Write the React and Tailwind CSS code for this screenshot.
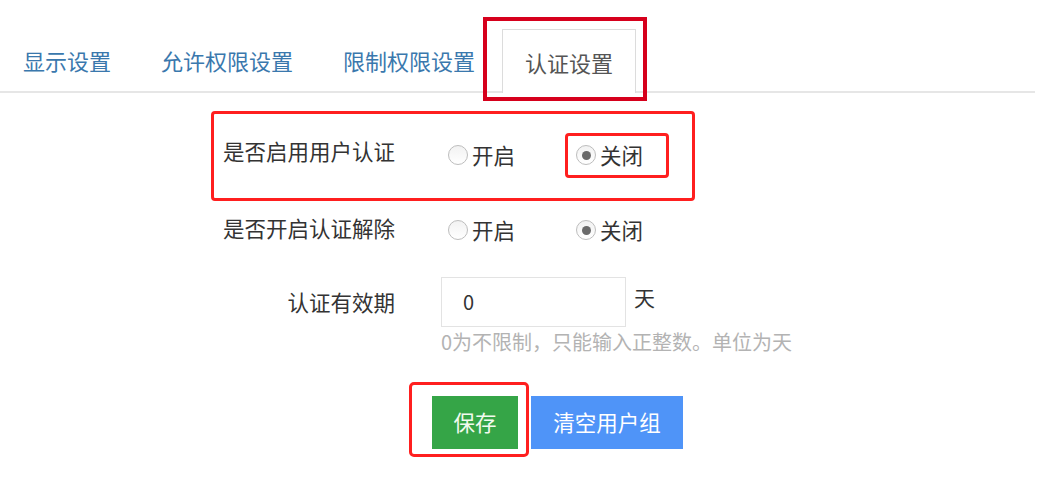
import React from "react";

const tabs = ["显示设置", "允许权限设置", "限制权限设置", "认证设置"];

function Radio({ checked, label }) {
  return (
    <div className="flex items-center">
      <span className="w-[20px] h-[20px] rounded-full border-[1.5px] border-[#bdbdbd] bg-gradient-to-b from-[#f2f2f2] to-white flex items-center justify-center">
        {checked && <span className="w-[9px] h-[9px] rounded-full bg-[#6a6a6a]" />}
      </span>
      <span className="ml-[4px] text-[21.5px] leading-[30px] text-[#333]">{label}</span>
    </div>
  );
}

function RadioRow({ label, mt }) {
  return (
    <div className={`flex items-center h-[40px] ${mt}`}>
      <div className="w-[395px] text-right text-[21.5px] leading-[30px] text-[#333] mb-[8px]">{label}</div>
      <div className="ml-[46px] pl-[7px] flex items-center">
        <div className="w-[128px]">
          <Radio label="开启" />
        </div>
        <Radio checked label="关闭" />
      </div>
    </div>
  );
}

export default function App() {
  return (
    <div className="relative w-[1044px] h-[488px] bg-white overflow-hidden font-['Noto_Sans_CJK_SC','Noto_Sans',sans-serif]">
      {/* tabs */}
      <div className="flex items-start w-[1035px] border-b-2 border-[#e6e6e6] pt-[29px]">
        {tabs.map((t, i) =>
          i === 3 ? (
            <div
              key={t}
              className="h-[64px] mb-[-2px] px-[22px] mr-[4px] border-x border-t border-[#dcdcdc] bg-white flex items-center text-[22px] leading-[32px] text-[#555]"
            >
              {t}
            </div>
          ) : (
            <div
              key={t}
              className="h-[62px] px-[22px] mr-[4px] border border-transparent flex items-center text-[22px] leading-[32px] text-[#3a78ad]"
            >
              {t}
            </div>
          )
        )}
      </div>

      {/* form */}
      <div className="flex flex-col">
        <RadioRow label="是否启用用户认证" mt="mt-[42px]" />
        <div className="flex items-center h-[40px] mt-[35px]">
          <div className="w-[395px] text-right text-[21.5px] leading-[30px] text-[#333] mb-[5px]">是否开启认证解除</div>
          <div className="ml-[46px] pl-[7px] flex items-center">
            <div className="w-[128px]">
              <Radio label="开启" />
            </div>
            <Radio checked label="关闭" />
          </div>
        </div>

        <div className="flex items-center h-[50px] mt-[27px]">
          <div className="w-[395px] text-right text-[21.5px] leading-[30px] text-[#333]">认证有效期</div>
          <div className="ml-[46px] w-[185px] h-[50px] border border-[#e3e3e3] flex items-center pl-[21px] text-[20px] text-[#333]">
            0
          </div>
          <div className="ml-[8px] mb-[10px] text-[21px] leading-[30px] text-[#333]">天</div>
        </div>

        <div className="ml-[441px] mt-[1px] text-[20px] leading-[28px] text-[#b3b3b3]">
          0为不限制，只能输入正整数。单位为天
        </div>

        <div className="ml-[432px] mt-[40px] flex items-center gap-[13px]">
          <div className="w-[86px] h-[53px] bg-[#35a547] text-[#f2faef] text-[21.5px] flex items-center justify-center">
            保存
          </div>
          <div className="w-[152px] h-[53px] bg-[#4f94f8] text-white text-[21.5px] flex items-center justify-center">
            清空用户组
          </div>
        </div>
      </div>

      {/* red annotation boxes */}
      <div className="absolute left-[483px] top-[17px] w-[164px] h-[84px] border-[4px] border-[#d6001c]" />
      <div className="absolute left-[211px] top-[111px] w-[484px] h-[90px] border-[3px] border-[#ff1f1f] rounded-[4px]" />
      <div className="absolute left-[565px] top-[133px] w-[104px] h-[45px] border-[3px] border-[#ff1f1f] rounded-[4px]" />
      <div className="absolute left-[409px] top-[382px] w-[120px] h-[75px] border-[3px] border-[#ff1f1f] rounded-[5px]" />
    </div>
  );
}
